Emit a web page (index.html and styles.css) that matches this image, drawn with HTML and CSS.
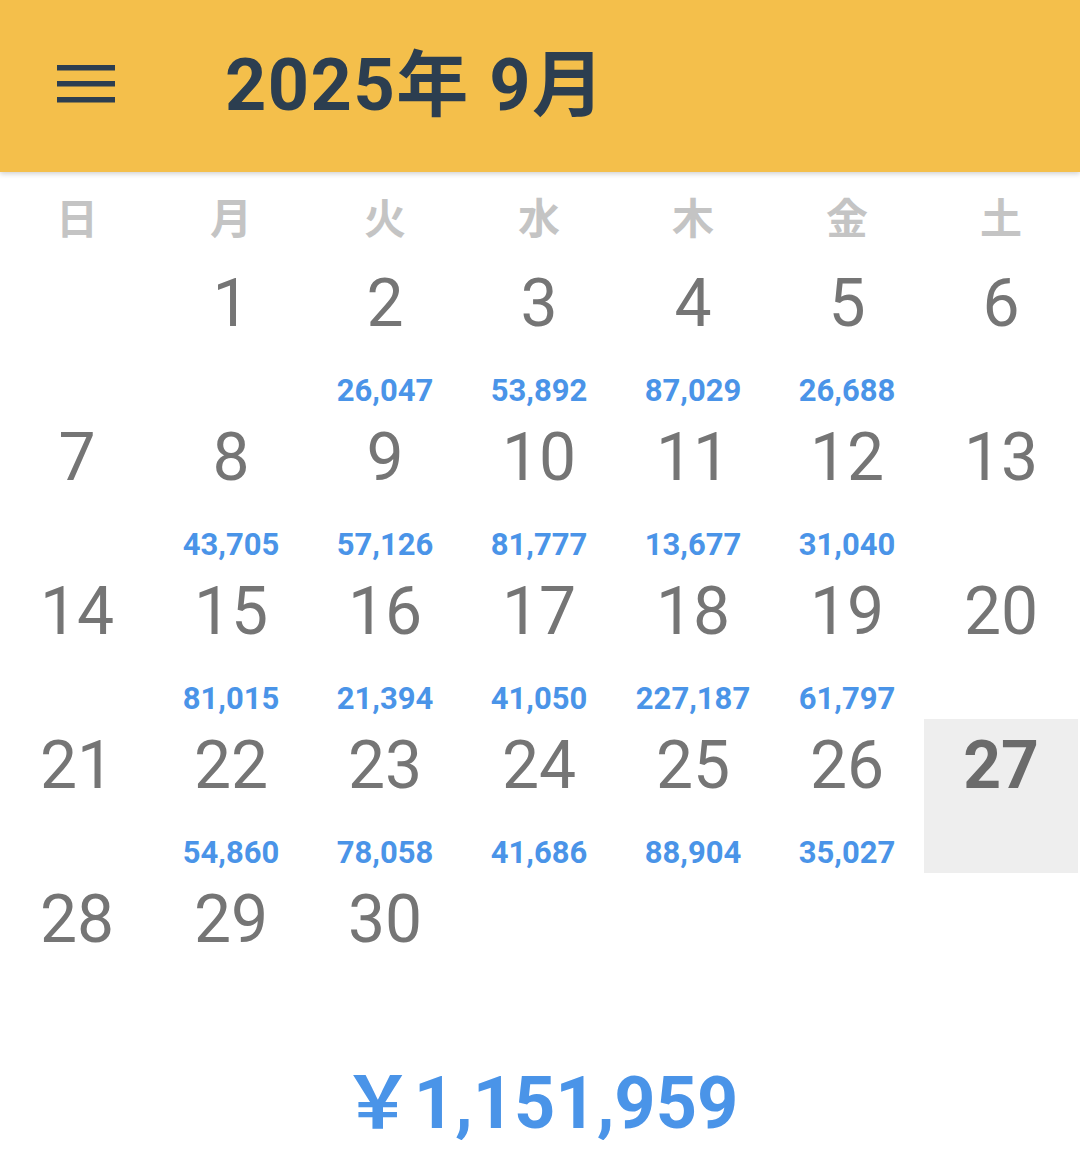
FILE: index.html
```html
<!DOCTYPE html>
<html lang="ja">
<head>
    <meta charset="UTF-8">
    <meta name="viewport" content="width=device-width, initial-scale=1.0">
    <title>2025年 9月</title>
    <link rel="stylesheet" href="styles.css">
</head>
<body>
    <header class="app-bar">
        <button class="menu-btn" aria-label="メニュー">
            <svg width="58" height="38" viewBox="0 0 58 38">
                <rect x="0" y="0" width="58" height="5.5" fill="#2c3e50"/>
                <rect x="0" y="16" width="58" height="5.5" fill="#2c3e50"/>
                <rect x="0" y="32" width="58" height="5.5" fill="#2c3e50"/>
            </svg>
        </button>
        <h1 class="month-title">2025年 9月</h1>
    </header>

    <main class="calendar">
        <div class="weekdays">
            <div class="weekday">日</div>
            <div class="weekday">月</div>
            <div class="weekday">火</div>
            <div class="weekday">水</div>
            <div class="weekday">木</div>
            <div class="weekday">金</div>
            <div class="weekday">土</div>
        </div>

        <div class="days">
            <div class="day empty"></div>
            <div class="day"><span class="num">1</span></div>
            <div class="day"><span class="num">2</span><span class="amount">26,047</span></div>
            <div class="day"><span class="num">3</span><span class="amount">53,892</span></div>
            <div class="day"><span class="num">4</span><span class="amount">87,029</span></div>
            <div class="day"><span class="num">5</span><span class="amount">26,688</span></div>
            <div class="day"><span class="num">6</span></div>

            <div class="day"><span class="num">7</span></div>
            <div class="day"><span class="num">8</span><span class="amount">43,705</span></div>
            <div class="day"><span class="num">9</span><span class="amount">57,126</span></div>
            <div class="day"><span class="num">10</span><span class="amount">81,777</span></div>
            <div class="day"><span class="num">11</span><span class="amount">13,677</span></div>
            <div class="day"><span class="num">12</span><span class="amount">31,040</span></div>
            <div class="day"><span class="num">13</span></div>

            <div class="day"><span class="num">14</span></div>
            <div class="day"><span class="num">15</span><span class="amount">81,015</span></div>
            <div class="day"><span class="num">16</span><span class="amount">21,394</span></div>
            <div class="day"><span class="num">17</span><span class="amount">41,050</span></div>
            <div class="day"><span class="num">18</span><span class="amount">227,187</span></div>
            <div class="day"><span class="num">19</span><span class="amount">61,797</span></div>
            <div class="day"><span class="num">20</span></div>

            <div class="day"><span class="num">21</span></div>
            <div class="day"><span class="num">22</span><span class="amount">54,860</span></div>
            <div class="day"><span class="num">23</span><span class="amount">78,058</span></div>
            <div class="day"><span class="num">24</span><span class="amount">41,686</span></div>
            <div class="day"><span class="num">25</span><span class="amount">88,904</span></div>
            <div class="day"><span class="num">26</span><span class="amount">35,027</span></div>
            <div class="day today"><span class="num">27</span></div>

            <div class="day"><span class="num">28</span></div>
            <div class="day"><span class="num">29</span></div>
            <div class="day"><span class="num">30</span></div>
        </div>

        <div class="total">￥1,151,959</div>
    </main>
</body>
</html>
```

FILE: styles.css
```css
* {
    margin: 0;
    padding: 0;
    box-sizing: border-box;
}

body {
    font-family: Roboto, "Noto Sans CJK JP", sans-serif;
    background: #ffffff;
    width: 1080px;
}

.app-bar {
    height: 172px;
    background: #f4bf4b;
    display: flex;
    align-items: center;
    padding-left: 57px;
    box-shadow: 0 2px 5px rgba(0, 0, 0, 0.18);
    position: relative;
    z-index: 1;
}

.menu-btn {
    background: transparent;
    border: none;
    display: flex;
    margin-top: -4px;
    cursor: pointer;
}

.month-title {
    margin-left: 110px;
    font-size: 72px;
    font-weight: 700;
    color: #2c3e50;
    line-height: 1;
    letter-spacing: 1.5px;
}

.weekdays {
    display: grid;
    grid-template-columns: repeat(7, 154px);
    height: 85px;
}

.weekday {
    display: flex;
    align-items: center;
    justify-content: center;
    padding-top: 2px;
    font-family: "Noto Sans CJK JP", sans-serif;
    font-size: 42px;
    font-weight: 700;
    color: #c4c4c4;
    line-height: 1;
}

.days {
    display: grid;
    grid-template-columns: repeat(7, 154px);
    grid-auto-rows: 154px;
}

.day {
    display: flex;
    flex-direction: column;
    align-items: center;
    padding-bottom: 5px;
}

.day .num {
    margin-top: 14px;
    font-size: 66px;
    line-height: 1;
    color: #757575;
}

.day .amount {
    margin-top: auto;
    font-size: 31px;
    font-weight: 700;
    line-height: 1;
    color: #4a94e8;
}

.day.today {
    background: #eeeeee;
}

.day.today .num {
    font-weight: 700;
    color: #6b6b6b;
}

.total {
    margin-top: 41px;
    text-align: center;
    font-size: 72px;
    font-weight: 700;
    line-height: 1;
    color: #4a94e8;
}
```
